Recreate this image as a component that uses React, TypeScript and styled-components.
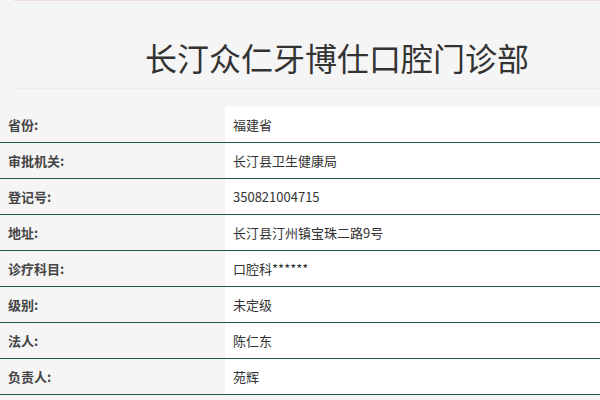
import React from "react";
import styled, { createGlobalStyle } from "styled-components";

const GlobalStyle = createGlobalStyle`
  html, body {
    margin: 0;
    padding: 0;
    background: #f5f5f5;
    font-family: "Noto Sans CJK SC", "Noto Sans", sans-serif;
    color: #333;
  }
`;

const Page = styled.div`
  width: 600px;
  height: 400px;
  overflow: hidden;
  background: #f5f5f5;
`;

const Header = styled.div`
  margin-left: 14px;
  border-top: 1px solid #efdde1;
  border-bottom: 1px solid #ebebeb;
  padding: 34px 0 9px 131px;
`;

const Title = styled.h1`
  margin: 0;
  font-size: 32px;
  line-height: 44px;
  font-weight: 400;
  color: #333;
  white-space: nowrap;
`;

const Table = styled.div`
  margin-top: 18px;
  display: flex;
  flex-direction: column;
`;

const Row = styled.div`
  display: grid;
  grid-template-columns: 225px 1fr;
  height: 35px;
  border-bottom: 1px solid #1e5c43;
`;

const Label = styled.div`
  display: flex;
  align-items: center;
  padding-left: 8px;
  background: #f5f5f5;
  font-size: 13px;
  font-weight: 700;
  color: #444;
`;

const Value = styled.div`
  display: flex;
  align-items: center;
  padding-left: 8px;
  background: #fff;
  font-size: 13px;
  color: #333;
`;

const rows: [string, string][] = [
  ["省份:", "福建省"],
  ["审批机关:", "长汀县卫生健康局"],
  ["登记号:", "350821004715"],
  ["地址:", "长汀县汀州镇宝珠二路9号"],
  ["诊疗科目:", "口腔科******"],
  ["级别:", "未定级"],
  ["法人:", "陈仁东"],
  ["负责人:", "苑辉"],
];

export default function App() {
  return (
    <Page>
      <GlobalStyle />
      <Header>
        <Title>长汀众仁牙博仕口腔门诊部</Title>
      </Header>
      <Table>
        {rows.map(([k, v]) => (
          <Row key={k}>
            <Label>{k}</Label>
            <Value>{v}</Value>
          </Row>
        ))}
      </Table>
    </Page>
  );
}
